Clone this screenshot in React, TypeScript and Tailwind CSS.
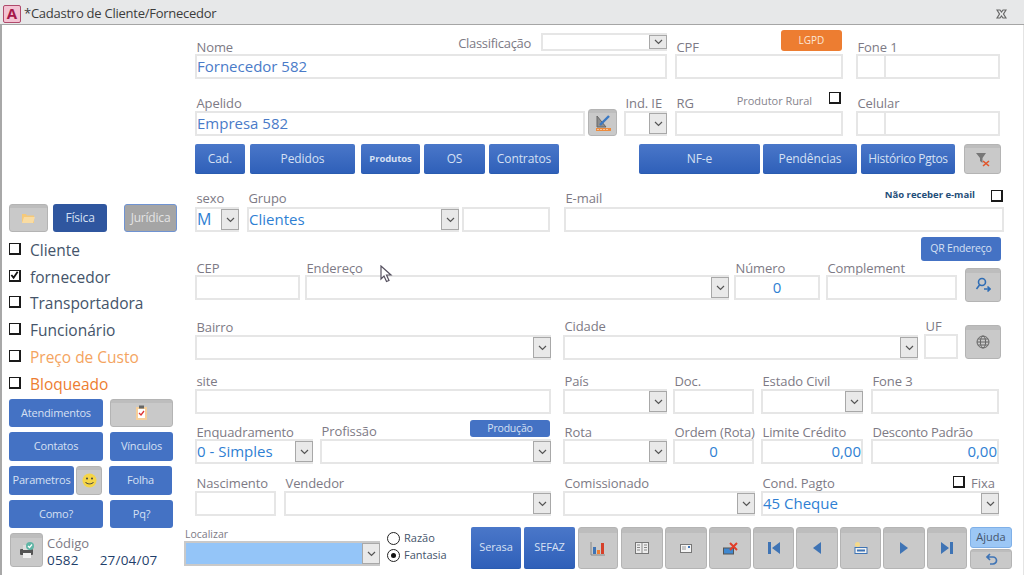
import type { ReactNode } from "react";

const font = "font-['Open_Sans',sans-serif]";

function Lb({ children, className = "" }: { children?: ReactNode; className?: string }) {
  return <div className={`h-[16px] pl-[1.5px] text-[13px] leading-[16px] tracking-[-0.1px] whitespace-nowrap text-[#7d7a85] ${className}`}>{children}</div>;
}

// caixa de texto
function Box({ value, className = "", textCls = "" }: { value?: string; className?: string; textCls?: string }) {
  return (
    <div className={`flex h-[25px] items-center overflow-hidden border-2 border-[#e6e6e6] bg-white text-[15px] text-[#2f7fd3] ${className} ${textCls}`}>
      {value}
    </div>
  );
}

// combo com a setinha
function Combo({ value, className = "", arrowCls = "" }: { value?: string; className?: string; arrowCls?: string }) {
  return (
    <div className={`flex h-[25px] items-stretch border-2 border-r-0 border-[#e6e6e6] bg-white text-[15px] text-[#2f7fd3] ${className}`}>
      <div className="flex min-w-0 flex-1 items-center overflow-hidden whitespace-nowrap pb-[1px]">{value}</div>
      <div className={`flex w-[18px] shrink-0 items-center justify-center border border-[#a8a8a8] bg-[#e9e9e9] ${arrowCls}`}>
        <svg width="9" height="6" viewBox="0 0 9 6" fill="none" stroke="#555" strokeWidth="1.2"><path d="M1 1l3.5 3.5L8 1" /></svg>
      </div>
    </div>
  );
}

function Field({ label, className = "", children, labelCls = "" }: { label: string; className?: string; children: ReactNode; labelCls?: string }) {
  return (
    <div className={`flex flex-col ${className}`}>
      <Lb className={labelCls}>{label}</Lb>
      {children}
    </div>
  );
}

function Blue({ children, className = "" }: { children: ReactNode; className?: string }) {
  return (
    <div className={`flex items-center justify-center rounded-[2px] border-b border-[#2a5cb0] bg-gradient-to-b from-[#4a77c9] to-[#2f60b9] text-[12px] tracking-[-0.1px] text-[#d6e0f3] ${className}`}>
      {children}
    </div>
  );
}

function Flat({ children, className = "" }: { children: ReactNode; className?: string }) {
  return (
    <div className={`flex items-center justify-center rounded-[3px] bg-[#4472c4] text-[11px] tracking-[-0.2px] text-[#d6e0f3] ${className}`}>
      {children}
    </div>
  );
}

function Gray({ children, className = "" }: { children?: ReactNode; className?: string }) {
  return (
    <div className={`flex items-center justify-center rounded-[3px] border border-[#b4b4b4] bg-gradient-to-b from-[#bdbdbd] from-[12%] to-[#c9c9c9] to-[12%] ${className}`}>
      {children}
    </div>
  );
}

function Check({ checked, className = "" }: { checked?: boolean; className?: string }) {
  return (
    <div className={`flex h-[12px] w-[12px] shrink-0 items-center justify-center border-[1.5px] border-b-2 border-r-2 border-[#1a1a1a] bg-white ${className}`}>
      {checked && (
        <svg width="10" height="10" viewBox="0 0 10 10" fill="none" stroke="#111" strokeWidth="2"><path d="M1.5 5l2.5 3 4.5-6.5" /></svg>
      )}
    </div>
  );
}

function CheckRow({ label, checked, className = "" }: { label: string; checked?: boolean; className?: string }) {
  return (
    <div className="flex h-[26.8px] items-center pl-[7px]">
      <Check checked={checked} className="mb-[3px]" />
      <span className={`ml-[9px] text-[15.5px] ${className}`}>{label}</span>
    </div>
  );
}

function Radio({ on, label }: { on?: boolean; label: string }) {
  return (
    <div className="flex h-[17px] items-center">
      <div className="flex h-[13px] w-[13px] items-center justify-center rounded-full border border-[#222] bg-white">
        {on && <div className="h-[5px] w-[5px] rounded-full bg-[#111]" />}
      </div>
      <span className="ml-[4px] text-[11px] text-[#44546a]">{label}</span>
    </div>
  );
}

function Nav({ d }: { d: string }) {
  return (
    <svg width="16" height="14" viewBox="0 0 16 14" fill="#3f74b5"><path d={d} /></svg>
  );
}

export default function App() {
  return (
    <div className={`flex h-[575px] w-[1024px] flex-col overflow-hidden bg-white ${font}`}>
      {/* barra de titulo */}
      <div className="flex h-[25px] shrink-0 items-center border-b border-[#a5a5a5] bg-[#e7e8e9] pl-[3px] pr-[17px] pt-[3px]">
        <div className="flex h-[18px] w-[18px] items-center justify-center rounded-[2px] border border-[#b04a6c] bg-[#f3c3d3] text-[15px] font-bold leading-none text-[#a5174a]">A</div>
        <span className="ml-[3px] text-[13px] tracking-[-0.25px] text-[#3c3c3c]">*Cadastro de Cliente/Fornecedor</span>
        <svg className="ml-auto" width="11" height="10" viewBox="0 0 11 10" fill="none" stroke="#666" strokeWidth="1.2">
          <path d="M1 1h3l1.5 2L7 1h3L7.5 5 10 9H7L5.5 7 4 9H1l2.5-4z" />
        </svg>
      </div>

      <div className="flex min-h-0 flex-1 border-l-2 border-r border-l-[#a8a8a8] border-r-[#e4e4e4]">
        {/* coluna da esquerda */}
        <div className="flex w-[182px] shrink-0 flex-col">
          <div className="mt-[179px] flex h-[28px] pl-[7px]">
            <Gray className="w-[39px]">
              <svg width="15" height="12" viewBox="0 0 15 12"><path d="M1 2h4l1 1.5h7V11H1z" fill="#f5c97a" /><path d="M1 11l2-6h11l-2 6z" fill="#f9dca3" /></svg>
            </Gray>
            <Flat className="ml-[5px] w-[54px] !bg-[#2f569f] !text-[12px]">Física</Flat>
            <div className="ml-[17px] flex w-[53px] items-center justify-center rounded-[3px] border border-[#6f93d2] bg-[#a5a5a5] text-[12px] tracking-[-0.2px] text-[#e4e4e4]">Jurídica</div>
          </div>
          <div className="mt-[5px] flex flex-col">
            <CheckRow label="Cliente" className="text-[#44546a]" />
            <CheckRow label="fornecedor" checked className="text-[#44546a]" />
            <CheckRow label="Transportadora" className="text-[#44546a]" />
            <CheckRow label="Funcionário" className="text-[#44546a]" />
            <CheckRow label="Preço de Custo" className="text-[#f4a460]" />
            <CheckRow label="Bloqueado" className="text-[#ed7d31]" />
          </div>
          <div className="mt-[1px] flex flex-col gap-[5px] pl-[7px]">
            <div className="flex h-[28px] gap-[7px]">
              <Flat className="w-[94px]">Atendimentos</Flat>
              <Gray className="w-[63px]">
                <svg width="13" height="16" viewBox="0 0 13 16"><rect x="1" y="2" width="11" height="13" fill="#f6cf9a" /><rect x="3" y="4" width="7" height="9" fill="#fff" /><rect x="4" y="0.5" width="5" height="3" fill="#666" /><path d="M4 8l2 2 3-4" fill="none" stroke="#d33" strokeWidth="1.3" /></svg>
              </Gray>
            </div>
            <div className="flex h-[29px] gap-[7px]">
              <Flat className="w-[94px]">Contatos</Flat>
              <Flat className="w-[63px]">Vínculos</Flat>
            </div>
            <div className="flex h-[29px]">
              <Flat className="w-[65px]">Parametros</Flat>
              <Gray className="ml-[2px] w-[26px]">
                <svg width="15" height="15" viewBox="0 0 15 15"><circle cx="7.5" cy="7.5" r="7" fill="#f5d547" /><circle cx="5" cy="5.5" r="1" fill="#444" /><circle cx="10" cy="5.5" r="1" fill="#444" /><path d="M3.5 9c1 2.5 7 2.5 8 0" fill="none" stroke="#444" /></svg>
              </Gray>
              <Flat className="ml-[7px] w-[63px]">Folha</Flat>
            </div>
            <div className="flex h-[28px] gap-[7px]">
              <Flat className="w-[94px]">Como?</Flat>
              <Flat className="w-[63px]">Pq?</Flat>
            </div>
          </div>
          <div className="mt-[5px] flex h-[34px] pl-[8px]">
            <Gray className="w-[33px]">
              <svg width="18" height="18" viewBox="0 0 18 18">
                <rect x="2" y="8" width="13" height="6" rx="1" fill="#555" />
                <rect x="5" y="12" width="8" height="5" fill="#f2f2f2" />
                <rect x="5" y="4" width="6" height="5" fill="#ddd" />
                <circle cx="12" cy="5" r="4" fill="#5fb5a5" />
                <path d="M10 5l1.5 1.5L14 3.5" fill="none" stroke="#fff" strokeWidth="1.2" />
              </svg>
            </Gray>
            <div className="ml-[4px] flex flex-col pt-[2px]">
              <span className="h-[17px] text-[13px] leading-[17px] text-[#7d7a85]">Código</span>
              <span className="h-[17px] whitespace-nowrap text-[13.5px] leading-[17px] tracking-[0.2px] text-[#1f3f6b]">0582<span className="ml-[21px]">27/04/07</span></span>
            </div>
          </div>
        </div>

        {/* formulario */}
        <div className="flex min-w-0 flex-1 flex-col">
          <div className="mt-[6px] flex h-[48px] items-end pl-[11px]">
            <div className="flex w-[472px] flex-col">
              <div className="flex h-[24px] items-end">
                <Lb className="mb-[-1px]">Nome</Lb>
                <Lb className="mb-[3px] ml-auto !tracking-[-0.3px]">Classificação</Lb>
                <Combo className="mb-[3px] ml-[10px] !h-[18px] w-[126px] shrink-0" />
              </div>
              <Box value="Fornecedor 582" textCls="!text-[#4a7bc8]" />
            </div>
            <div className="ml-[8px] flex w-[168px] flex-col">
              <div className="flex h-[24px] items-end">
                <Lb className="mb-[-1px]">CPF</Lb>
                <div className="mb-[3px] ml-auto mr-[1px] flex h-[21px] w-[61px] items-center justify-center rounded-[3px] bg-[#ed7d31] text-[10px] text-[#fbe6d6]">LGPD</div>
              </div>
              <Box />
            </div>
            <Field label="Fone 1" className="ml-[13px] w-[144px]" labelCls="mb-[-1px]">
              <div className="flex">
                <Box className="w-[30px]" />
                <Box className="flex-1 !border-l-0" />
              </div>
            </Field>
          </div>

          <div className="mt-[9px] flex h-[48px] items-end pl-[11px]">
            <Field label="Apelido" className="w-[390px]">
              <Box value="Empresa 582" textCls="!text-[#4a7bc8]" />
            </Field>
            <Gray className="ml-[3px] h-[27px] w-[29px]">
              <svg width="20" height="18" viewBox="0 0 20 18">
                <path d="M4 2v11h9z" fill="#8d8d8d" stroke="#666" />
                <path d="M7 11l9-9" stroke="#3a78c2" strokeWidth="2.4" />
                <rect x="3" y="14" width="15" height="3" fill="#ed8b3c" />
                <path d="M5 15v1M8 15v1M11 15v1M14 15v1" stroke="#fff" />
              </svg>
            </Gray>
            <Field label="Ind. IE" className="ml-[7px] w-[43px]">
              <Combo />
            </Field>
            <div className="ml-[8px] flex w-[168px] flex-col">
              <div className="flex h-[23px] items-start">
                <Lb className="mt-[7px]">RG</Lb>
                <span className="ml-[43px] mt-[6px] text-[11px] leading-[14px] font-medium tracking-[-0.05px] whitespace-nowrap text-[#87858e]">Produtor Rural</span>
                <Check className="ml-auto mr-[2px] mt-[4px]" />
              </div>
              <Box />
            </div>
            <Field label="Celular" className="ml-[13px] w-[144px]">
              <div className="flex">
                <Box className="w-[30px]" />
                <Box className="flex-1 !border-l-0" />
              </div>
            </Field>
          </div>

          <div className="mt-[8px] flex h-[30px] pl-[11px]">
            <Blue className="w-[50px] font-medium">Cad.</Blue>
            <Blue className="ml-[5px] w-[105px]">Pedidos</Blue>
            <Blue className="ml-[6px] w-[59px] pt-[2px] !text-[9.5px] font-bold">Produtos</Blue>
            <Blue className="ml-[4px] w-[61px]">OS</Blue>
            <Blue className="ml-[4px] w-[70px]">Contratos</Blue>
            <Blue className="ml-[80px] w-[121px]">NF-e</Blue>
            <Blue className="ml-[3px] w-[94px]">Pendências</Blue>
            <Blue className="ml-[4px] w-[94px] !tracking-[-0.3px]">Histórico Pgtos</Blue>
            <Gray className="ml-[9px] w-[37px]">
              <svg width="16" height="16" viewBox="0 0 16 16"><path d="M1 2h10L7.5 7v5L5 10V7z" fill="#777" /><path d="M8 10l6 5M14 10l-6 5" stroke="#e2552a" strokeWidth="1.6" /></svg>
            </Gray>
          </div>

          <div className="mt-[16px] flex h-[42px] items-end pl-[11px]">
            <Field label="sexo" className="w-[44px]" labelCls="mb-[1px]">
              <Combo value="M" className="!text-[16px]" />
            </Field>
            <Field label="Grupo" className="ml-[8px] w-[212px]" labelCls="mb-[1px]">
              <Combo value="Clientes" />
            </Field>
            <Box className="ml-[3px] w-[88px]" />
            <div className="ml-[14px] flex w-[440px] flex-col">
              <div className="flex h-[17px] items-start">
                <Lb>E-mail</Lb>
                <span className="ml-auto mr-[16px] mt-[-1px] text-[9.5px] font-bold leading-[12px] text-[#1f4e79]">Não receber e-mail</span>
                <Check className="mr-[1px]" />
              </div>
              <Box />
            </div>
          </div>

          <div className="mt-[5px] flex h-[24px] justify-end pr-[22px]">
            <Flat className="w-[80px] !text-[10.5px]">QR Endereço</Flat>
          </div>

          <div className="flex h-[41px] items-end pl-[11px]">
            <Field label="CEP" className="mb-[2px] w-[105px]" labelCls="mb-[-1px]"><Box /></Field>
            <div className="relative mb-[2px] ml-[5px] w-[424px]">
              <Field label="Endereço" labelCls="mb-[-1px]"><Combo /></Field>
              {/* ponteiro do mouse sobre o campo */}
              <svg className="absolute left-[75px] top-[5px]" width="13" height="18" viewBox="0 0 13 18" fill="#fff" stroke="#55505f" strokeWidth="1.2">
                <path d="M1 1v13l3-3 2.5 5.5 2.5-1L6.5 10H11z" />
              </svg>
            </div>
            <Field label="Número" className="mb-[2px] ml-[5px] w-[86px]" labelCls="mb-[-1px]">
              <Box value="0" className="justify-center" />
            </Field>
            <Field label="Complement" className="mb-[2px] ml-[6px] w-[131px]" labelCls="mb-[-1px]"><Box /></Field>
            <Gray className="ml-[8px] h-[34px] w-[36px]">
              <svg width="16" height="16" viewBox="0 0 16 16" fill="none" stroke="#2f6db5" strokeWidth="1.6"><circle cx="7" cy="5" r="3.5" /><path d="M4.5 8L1.5 12" /><path d="M9 12h6M12.5 9.5l2.5 2.5-2.5 2.5" /></svg>
            </Gray>
          </div>

          <div className="mt-[16px] flex h-[42px] items-end pl-[11px]">
            <Field label="Bairro" className="w-[356px]"><Combo /></Field>
            <Field label="Cidade" className="ml-[12px] w-[355px]" labelCls="mb-[1px]"><Combo /></Field>
            <Field label="UF" className="mb-[1px] ml-[6px] w-[34px]"><Box /></Field>
            <Gray className="mb-[1px] ml-[7px] h-[34px] w-[36px]">
              <svg width="14" height="14" viewBox="0 0 14 14" fill="none" stroke="#666"><circle cx="7" cy="7" r="6" /><ellipse cx="7" cy="7" rx="2.6" ry="6" /><path d="M1 7h12M2 4h10M2 10h10" /></svg>
            </Gray>
          </div>

          <div className="mt-[13px] flex h-[41px] items-end pl-[11px]">
            <Field label="site" className="w-[356px]"><Box /></Field>
            <Field label="País" className="ml-[12px] w-[104px]"><Combo /></Field>
            <Field label="Doc." className="ml-[6px] w-[81px]"><Box /></Field>
            <Field label="Estado Civil" className="ml-[7px] w-[102px]"><Combo /></Field>
            <Field label="Fone 3" className="ml-[8px] w-[128px]"><Box /></Field>
          </div>

          <div className="mt-[7px] flex h-[43px] items-end pl-[11px]">
            <Field label="Enquadramento" className="w-[118px]" labelCls="mb-[-1px]"><Combo value="0 - Simples" /></Field>
            <div className="ml-[7px] flex w-[231px] flex-col">
              <div className="flex h-[19px] items-start justify-between">
                <Lb className="mt-[3px]">Profissão</Lb>
                <Flat className="mr-[1px] h-[17px] w-[80px] !text-[10.5px]">Produção</Flat>
              </div>
              <Combo />
            </div>
            <Field label="Rota" className="ml-[12px] w-[104px]" labelCls="mb-[-1px]"><Combo /></Field>
            <Field label="Ordem (Rota)" className="ml-[6px] w-[81px]" labelCls="mb-[-1px]">
              <Box value="0" className="justify-center" />
            </Field>
            <Field label="Limite Crédito" className="ml-[7px] w-[102px]" labelCls="mb-[-1px]">
              <Box value="0,00" className="justify-end" />
            </Field>
            <Field label="Desconto Padrão" className="ml-[8px] w-[128px]" labelCls="mb-[-1px] !tracking-[-0.25px]">
              <Box value="0,00" className="justify-end" />
            </Field>
          </div>

          <div className="mt-[11px] flex h-[41px] items-end pl-[11px]">
            <Field label="Nascimento" className="w-[81px]"><Box /></Field>
            <Field label="Vendedor" className="ml-[8px] w-[267px]"><Combo /></Field>
            <Field label="Comissionado" className="ml-[12px] w-[192px]"><Combo /></Field>
            <div className="ml-[6px] flex w-[238px] flex-col">
              <div className="flex h-[16px] items-start">
                <Lb>Cond. Pagto</Lb>
                <Check className="ml-auto mr-[6px] mt-[1px]" />
                <span className="mr-[4px] text-[13px] leading-[16px] text-[#7d7a85]">Fixa</span>
              </div>
              <Combo value="45 Cheque" />
            </div>
          </div>

          <div className="mt-[11px] flex h-[42px]">
            <div className="mt-[1px] flex w-[196px] flex-col">
              <div className="h-[13px] pl-[1px] text-[10.5px] leading-[13px] text-[#7d7a85]">Localizar</div>
              <Combo className="!border-[#c9c9c9] !bg-[#94c5f8]" />
            </div>
            <div className="ml-[7px] mt-[3px] flex w-[66px] shrink-0 flex-col">
              <Radio label="Razão" />
              <Radio on label="Fantasia" />
            </div>
            <div className="ml-[18px] flex h-[42px]">
              <Blue className="w-[50px] !text-[11px]">Serasa</Blue>
              <Blue className="ml-[3px] w-[51px] !text-[11px]">SEFAZ</Blue>
              <Gray className="ml-[3px] w-[40px]">
                <svg width="16" height="15" viewBox="0 0 16 15"><path d="M1 1v13h14" fill="none" stroke="#888" /><rect x="3" y="6" width="3" height="7" fill="#3f74b5" /><rect x="7" y="9" width="3" height="4" fill="#ed7d31" /><rect x="11" y="2" width="3" height="11" fill="#d6402a" /></svg>
              </Gray>
              <Gray className="ml-[3px] w-[42px]">
                <svg width="14" height="12" viewBox="0 0 14 12"><rect x="0.5" y="0.5" width="13" height="11" fill="#eee" stroke="#777" /><path d="M7 1v10M2 3h3M2 5.5h3M2 8h3M9 3h3M9 5.5h3M9 8h3" stroke="#888" /></svg>
              </Gray>
              <Gray className="ml-[2px] w-[42px]">
                <svg width="12" height="9" viewBox="0 0 12 9"><rect x="0.5" y="0.5" width="11" height="8" fill="#f5f5f5" stroke="#777" /><path d="M2 3h4M2 5h4" stroke="#999" /><rect x="8" y="2" width="2" height="2" fill="#3f74b5" /></svg>
              </Gray>
              <Gray className="ml-[2px] w-[42px]">
                <svg width="15" height="15" viewBox="0 0 15 15"><rect x="0.5" y="7" width="10" height="6" fill="#3f88d0" stroke="#555" /><path d="M7 2l7 7M14 2L7 9" stroke="#e23c28" strokeWidth="2" /></svg>
              </Gray>
              <Gray className="ml-[2px] w-[41px]"><Nav d="M2 1h3v12H2zM14 1v12L6 7z" /></Gray>
              <Gray className="ml-[2px] w-[42px]"><Nav d="M12 1v12L4 7z" /></Gray>
              <Gray className="ml-[2px] w-[41px]">
                <svg width="14" height="14" viewBox="0 0 14 14"><circle cx="3.5" cy="3.5" r="2.5" fill="#f5d98a" /><rect x="1" y="6.5" width="12" height="6" fill="#f2f2f2" stroke="#3f74b5" /><rect x="3" y="8.5" width="8" height="2" fill="#3f74b5" /></svg>
              </Gray>
              <Gray className="ml-[2px] w-[42px]"><Nav d="M4 1v12l8-6z" /></Gray>
              <Gray className="ml-[2px] w-[40px]"><Nav d="M2 1v12l8-6zM11 1h3v12h-3z" /></Gray>
              <div className="ml-[3px] flex w-[42px] flex-col gap-[1px]">
                <div className="flex h-[21px] items-center justify-center rounded-[3px] border border-[#7fb0e8] bg-[#9cc7f5] text-[11px] text-[#44546a]">Ajuda</div>
                <Gray className="h-[20px]">
                  <svg width="13" height="12" viewBox="0 0 13 12" fill="none" stroke="#3f74b5" strokeWidth="1.7"><path d="M5 1L2 4l3 3M2 4h6a3 3 0 010 7H5" /></svg>
                </Gray>
              </div>
            </div>
          </div>
        </div>
      </div>
    </div>
  );
}
